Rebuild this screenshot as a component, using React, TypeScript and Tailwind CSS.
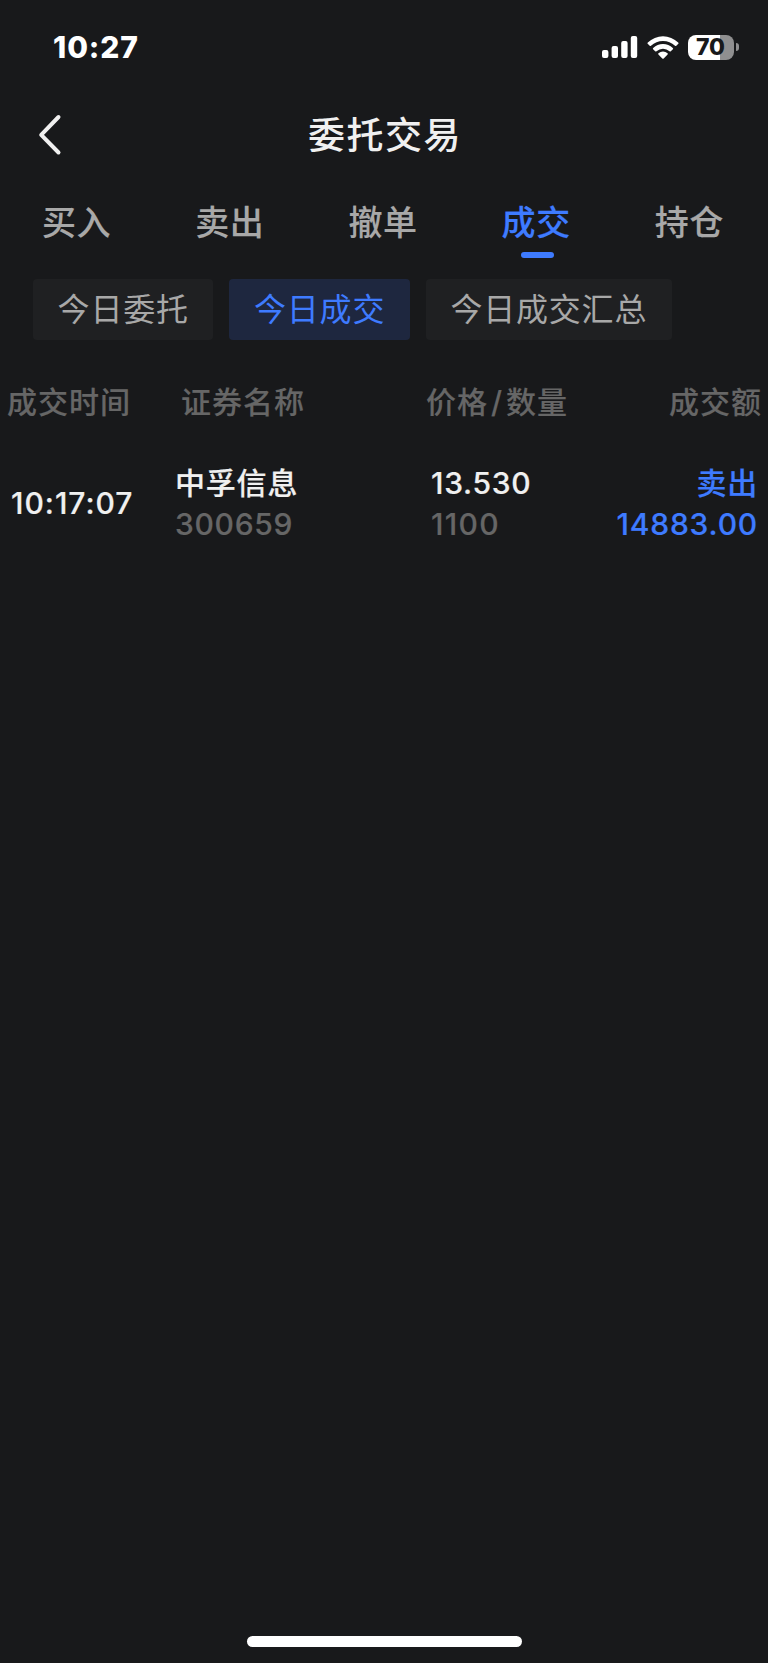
import React from 'react';

interface Trade {
  time: string;
  name: string;
  code: string;
  price: string;
  count: string;
  side: string;
  amount: string;
}

const tabs = ['买入', '卖出', '撤单', '成交', '持仓'];
const filters = ['今日委托', '今日成交', '今日成交汇总'];
const trades: Trade[] = [
  { time: '10:17:07', name: '中孚信息', code: '300659', price: '13.530', count: '1100', side: '卖出', amount: '14883.00' },
];

const StatusBar = () => (
  <div className="flex h-[94px] items-center justify-between pl-[53px] pr-[29px] text-white">
    <span className="text-[30px] font-extrabold leading-none tracking-[0.9px]">10:27</span>
    <div className="flex items-center">
      <svg width="36" height="24" viewBox="0 0 36 24" fill="currentColor">
        <rect x="0" y="15" width="6.4" height="8" rx="2" />
        <rect x="9.6" y="11" width="6.4" height="12" rx="2" />
        <rect x="19.2" y="6" width="6.4" height="17" rx="2" />
        <rect x="28.8" y="1" width="6.4" height="22" rx="2" />
      </svg>
      <svg className="ml-[9px]" width="32" height="24" viewBox="0 0 32 24" fill="currentColor">
        <path d="M.8 7.4a22 22 0 0 1 30.4 0c.5.5.5 1 .1 1.4l-2 2c-.4.4-.8.4-1.3 0a17.4 17.4 0 0 0-24 0c-.5.4-.9.4-1.3 0l-2-2c-.4-.4-.4-.9.1-1.4z" />
        <path d="M6.2 12.9a14.2 14.2 0 0 1 19.6 0c.5.5.5.9.1 1.3l-2.1 2.1c-.4.4-.8.4-1.3 0a9.5 9.5 0 0 0-13 0c-.5.4-.9.4-1.3 0l-2.1-2.1c-.4-.4-.4-.8.1-1.3z" />
        <path d="M11.5 18.3a6.6 6.6 0 0 1 9 0c.5.4.5.8.1 1.2l-3.9 3.9c-.5.5-.9.5-1.4 0l-3.9-3.9c-.4-.4-.4-.8.1-1.2z" />
      </svg>
      <div className="ml-[9px] flex h-[25px] w-[46px] items-center justify-center rounded-[8px] bg-[linear-gradient(to_right,#fff_70%,#8f8f90_70%)] pr-px text-[23px] font-extrabold leading-none text-[#18191b]">
        70
      </div>
      <div className="ml-[2px] h-[8px] w-[3px] rounded-r-full bg-[#8f8f90]" />
    </div>
  </div>
);

export default function App() {
  const activeTab = '成交';
  const activeFilter = '今日成交';

  return (
    <div className="flex h-[1663px] w-[768px] flex-col bg-[#18191b] font-['Inter','Noto_Sans_CJK_SC',sans-serif]">
      <StatusBar />

      <header className="mt-px grid h-[80px] grid-cols-[1fr_auto_1fr] items-center text-[#f0f0f0]">
        <svg
          className="ml-[38px]"
          width="24"
          height="42"
          viewBox="0 0 24 42"
          fill="none"
          stroke="currentColor"
          strokeWidth="4"
          strokeLinecap="round"
          strokeLinejoin="round"
        >
          <path d="M20.5 3 3.2 20.8 20.5 38.5" />
        </svg>
        <h1 className="pl-[2px] pt-[2px] text-[37px] font-medium leading-[40px] tracking-[1.5px]">委托交易</h1>
      </header>

      <nav className="mr-[2px] grid h-[83px] grid-cols-5 text-center text-[34px] font-medium leading-[40px] tracking-[0.6px] [-webkit-text-stroke:0.15px]">
        {tabs.map((tab) => (
          <div key={tab} className={tab === activeTab ? 'flex flex-col items-center pt-[28px] text-[#3e7bff]' : 'pt-[28px] text-[#a8a8a8]'}>
            <span>{tab}</span>
            {tab === activeTab && <span className="ml-[2px] mt-[9px] h-[6px] w-[33px] rounded-full bg-[#3e7bff]" />}
          </div>
        ))}
      </nav>

      <div className="mt-[21px] flex gap-[16px] pl-[33px] text-[32px] tracking-[0.8px]">
        {filters.map((filter) => (
          <div
            key={filter}
            className={
              filter === activeFilter
                ? 'h-[61px] rounded-[4px] bg-[#1e273f] px-[24.6px] leading-[62px] text-[#3e7bff]'
                : 'h-[61px] rounded-[4px] bg-[#1f2022] px-[24.6px] leading-[62px] text-[#a8a8a8]'
            }
          >
            {filter}
          </div>
        ))}
      </div>

      <div className="mt-[42px] grid grid-cols-[174px_245px_1fr_auto] pl-[7px] pr-[6px] text-[30px] font-medium leading-[40px] tracking-[1px] text-[#666] [-webkit-text-stroke:0.15px]">
        <span>成交时间</span>
        <span>证券名称</span>
        <span>
          价格<span className="mx-[3px]">/</span>数量
        </span>
        <span>成交额</span>
      </div>

      {trades.map((trade) => (
        <div
          key={trade.time}
          className="mt-[41px] grid grid-cols-[164px_256px_1fr_auto] items-center pl-[11px] pr-[10px] text-[30px] font-medium leading-[41px] tracking-[0.8px] text-[#f0f0f0] [-webkit-text-stroke:0.2px]"
        >
          <span className="pb-[2px] tracking-[1px]">{trade.time}</span>
          <div className="flex flex-col">
            <span>{trade.name}</span>
            <span className="tracking-[0.7px] text-[#666]">{trade.code}</span>
          </div>
          <div className="flex flex-col">
            <span className="tracking-[0.7px]">{trade.price}</span>
            <span className="tracking-[1.3px] text-[#666]">{trade.count}</span>
          </div>
          <div className="flex flex-col text-right text-[#3e7bff]">
            <span>{trade.side}</span>
            <span>{trade.amount}</span>
          </div>
        </div>
      ))}

      <div className="mx-auto mb-[16px] mt-auto h-[11px] w-[275px] rounded-full bg-white" />
    </div>
  );
}
